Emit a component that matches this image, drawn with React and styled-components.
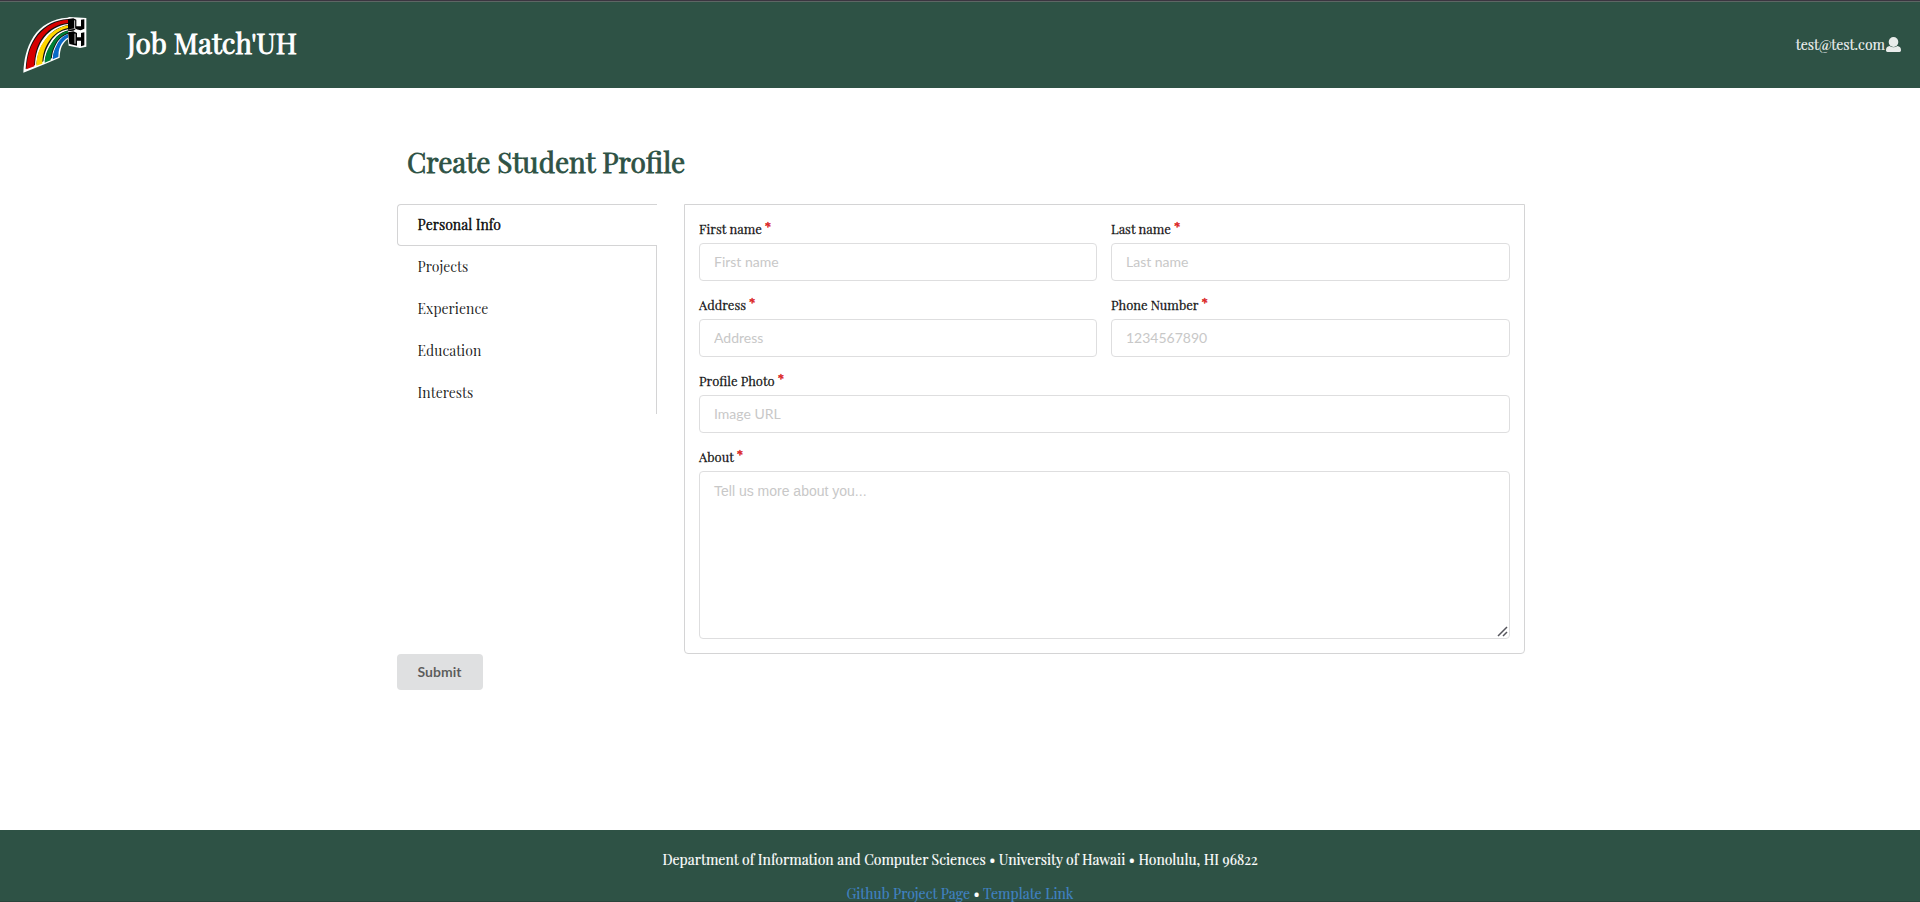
import React from "react";
import styled, { createGlobalStyle } from "styled-components";

const serif = '"Playfair Display", "Liberation Serif", serif';
const sans = 'Lato, "Liberation Sans", sans-serif';
const green = "#2e5245";

const GlobalStyle = createGlobalStyle`
  *, *::before, *::after { box-sizing: border-box; }
  body { margin: 0; background: #fff; overflow: hidden; font-family: ${serif}; font-size: 14px; }
`;

const Page = styled.div`
  display: flex;
  flex-direction: column;
  height: 902px;
  overflow: hidden;
`;

const Header = styled.header`
  display: flex;
  align-items: center;
  flex: none;
  height: 88px;
  padding: 0 19px 0 10px;
  background: ${green};
  border-top: 1px solid #3b3540;
  box-shadow: inset 0 1px 0 #5d6664;
  color: #fff;
`;

const Logo = styled.svg`
  flex: none;
  width: 90px;
  height: 75px;
  margin-top: -5px;
`;

const Brand = styled.h1`
  margin: -4px auto 0 27px;
  font-size: 28px;
  font-weight: 400;
  line-height: 36px;
  -webkit-text-stroke: 0.9px #fff;
`;

const Account = styled.a`
  display: flex;
  align-items: center;
  gap: 1px;
  color: rgba(255, 255, 255, 0.9);
  line-height: 20px;
  -webkit-text-stroke: 0.2px rgba(255, 255, 255, 0.9);
`;

const Main = styled.main`
  flex: 1;
  width: 1128px;
  margin-left: 397px;
  padding-top: 55px;
`;

const Title = styled.h2`
  margin: 0 0 23px 10px;
  color: ${green};
  font-size: 28px;
  font-weight: 400;
  line-height: 38px;
  -webkit-text-stroke: 0.8px ${green};
`;

const Columns = styled.div`
  display: flex;
  justify-content: space-between;
  align-items: flex-start;
`;

const Tabs = styled.nav`
  display: flex;
  flex-direction: column;
  width: 260px;
`;

const Tab = styled.a`
  display: flex;
  align-items: center;
  height: 42px;
  padding: 0 0 1px 20.6px;
  border: solid #d4d4d5;
  border-width: 0 1px 0 0;
  color: rgba(0, 0, 0, 0.87);
  ${(p) =>
    p.$active &&
    `
    border-width: 1px 0 1px 1px;
    border-radius: 4px 0 0 4px;
    color: rgba(0, 0, 0, 0.95);
    padding-left: 19.6px;
    -webkit-text-stroke: 0.4px rgba(0, 0, 0, 0.95);
  `}
`;

const Card = styled.form`
  display: grid;
  grid-template-columns: 398px 1fr;
  gap: 14px;
  width: 841px;
  padding: 14px;
  border: 1px solid #d4d4d5;
  border-radius: 0 0 4px 4px;
`;

const Field = styled.label`
  display: flex;
  flex-direction: column;
  gap: 4px;
  position: relative;
  grid-column: ${(p) => (p.$wide ? "1 / -1" : "auto")};
`;

const Caption = styled.span`
  display: flex;
  height: 20px;
  color: rgba(0, 0, 0, 0.87);
  font-size: 13px;
  line-height: 20px;
  -webkit-text-stroke: 0.3px rgba(0, 0, 0, 0.87);
`;

const Required = styled.span`
  margin-left: 3px;
  color: #db2828;
  line-height: 14px;
  -webkit-text-stroke: 0.5px #db2828;
`;

const Input = styled.input`
  width: 100%;
  height: 38px;
  padding: 0 14px 2px;
  border: 1px solid #dededf;
  border-radius: 4px;
  background: #fff;
  font: 14px/17px ${sans};
  outline: none;
  &::placeholder { color: #c8c8c8; opacity: 1; }
`;

const TextArea = styled.textarea`
  display: block;
  width: 100%;
  height: 168px;
  padding: 10px 14px;
  border: 1px solid #dededf;
  border-radius: 4px;
  font: 14px/18px "Liberation Sans", sans-serif;
  resize: none;
  outline: none;
  &::placeholder { color: #c8c8c8; opacity: 1; }
`;

const Grip = styled.svg`
  position: absolute;
  right: 2px;
  bottom: 2px;
  width: 11px;
  height: 11px;
`;

const Submit = styled.button`
  display: block;
  width: 86px;
  height: 36px;
  padding: 0 1px 0 0;
  border: 0;
  border-radius: 4px;
  background: #dfe0e1;
  color: rgba(0, 0, 0, 0.6);
  font: 700 14px/14px ${sans};
`;

const Footer = styled.footer`
  flex: none;
  height: 72px;
  padding-top: 20px;
  background: ${green};
  border-bottom: 1px solid #29443b;
  color: #fff;
  text-align: center;
  line-height: 20px;
`;

const FooterLine = styled.p`
  margin: 0 0 14px;
  -webkit-text-stroke: 0.15px currentColor;
`;

const Link = styled.a`
  color: #4183c4;
`;

const fields = [
  { label: "First name", hint: "First name" },
  { label: "Last name", hint: "Last name" },
  { label: "Address", hint: "Address" },
  { label: "Phone Number", hint: "1234567890" },
  { label: "Profile Photo", hint: "Image URL", wide: true },
];

const tabs = [
  { name: "Personal Info", active: true },
  { name: "Projects" },
  { name: "Experience" },
  { name: "Education" },
  { name: "Interests" },
];

function RainbowLogo() {
  return (
    <Logo viewBox="0 0 270 225">
      <path
        d="M40 203 C42 165 48 130 70 95 C92 62 128 40 172 38 L178 36 L229 39 L229 125 L210 129 L176 122 L174 102 C156 114 150 132 149 158 L105 177 Z"
        fill="#fff"
      />
      <path
        d="M47 192 C50 150 58 120 82 88 C105 60 135 45 174 42 L174 94 C154 106 144 128 142 154 L101 169 Z"
        fill="#111"
      />
      <path d="M49 193 C52 150 61 120 84 91 C108 61 138 47 174 44 L174 54 C145 57 119 69 100 94 C80 120 73 149 73 184 Z" fill="#d60000" />
      <path d="M75 184 C76 150 84 121 103 97 C121 74 146 60 174 57 L174 60 C146 66 125 79 108 102 C89 128 81 151 79 182 Z" fill="#fff" />
      <path d="M79 182 C80 153 87 128 106 103 C124 80 147 66 174 61 L174 69 C149 74 130 89 116 110 C103 130 98 150 97 176 Z" fill="#ffd500" />
      <path d="M100 175 C101 152 107 132 121 110 C135 89 151 77 174 73 L174 76 C151 83 138 94 126 114 C112 136 106 152 104 174 Z" fill="#fff" />
      <path d="M104 173 C105 152 111 135 125 114 C138 94 152 83 174 77 L174 84 C154 90 142 103 133 122 C125 138 123 151 122 166 Z" fill="#008037" />
      <path d="M125 165 C126 148 129 135 137 120 C146 102 157 93 174 87 L174 89 C157 97 147 108 139 125 C131 142 130 150 128 163 Z" fill="#fff" />
      <path d="M128 163 C129 148 132 136 140 121 C148 105 158 93 174 88 L174 98 C158 106 150 122 147 135 C145 144 146 151 145 156 Z" fill="#0869c8" />
      <path d="M174 42 L190 40 L199 44 V64 H213 V44 L223 43 V71 L212 76 L198 73 L190 77 L174 79 Z" fill="#000" />
      <path d="M194 46 V71 L200 74" stroke="#fff" strokeWidth="2.5" fill="none" />
      <path d="M174 82 L190 79 L201 84 V97 H213 V84 L223 82 V121 L213 124 V107 H201 V122 L178 117 Z" fill="#000" />
      <path d="M195 86 V116" stroke="#fff" strokeWidth="2.5" fill="none" />
      <path d="M172 76 L194 70" stroke="#ddd" strokeWidth="1.5" fill="none" />
    </Logo>
  );
}

function UserIcon() {
  return (
    <svg width="15" height="15" viewBox="0 0 15 15" fill="#e9eceb">
      <ellipse cx="7.5" cy="5" rx="4.8" ry="5" />
      <path d="M3.6 9 Q7.5 11.7 11.4 9 Q15 9.6 15 13 V13.6 Q15 15 13.6 15 H1.4 Q0 15 0 13.6 V13 Q0 9.6 3.6 9Z" />
    </svg>
  );
}

function FieldCaption({ children }) {
  return (
    <Caption>
      {children}
      <Required>*</Required>
    </Caption>
  );
}

export default function App() {
  return (
    <Page>
      <GlobalStyle />
      <Header>
        <RainbowLogo />
        <Brand>Job Match'UH</Brand>
        <Account>
          test@test.com
          <UserIcon />
        </Account>
      </Header>
      <Main>
        <Title>Create Student Profile</Title>
        <Columns>
          <Tabs>
            {tabs.map((t) => (
              <Tab key={t.name} $active={t.active}>
                {t.name}
              </Tab>
            ))}
          </Tabs>
          <Card>
            {fields.map((f) => (
              <Field key={f.label} $wide={f.wide}>
                <FieldCaption>{f.label}</FieldCaption>
                <Input placeholder={f.hint} />
              </Field>
            ))}
            <Field $wide>
              <FieldCaption>About</FieldCaption>
              <TextArea placeholder="Tell us more about you..." />
              <Grip viewBox="0 0 11 11" fill="none" stroke="#55555c" strokeWidth="1.5">
                <path d="M1 10 L10 1 M6 10 L10 6" />
              </Grip>
            </Field>
          </Card>
        </Columns>
        <Submit>Submit</Submit>
      </Main>
      <Footer>
        <FooterLine>
          Department of Information and Computer Sciences • University of Hawaii • Honolulu, HI 96822
        </FooterLine>
        <FooterLine>
          <Link>Github Project Page</Link> • <Link>Template Link</Link>
        </FooterLine>
      </Footer>
    </Page>
  );
}
